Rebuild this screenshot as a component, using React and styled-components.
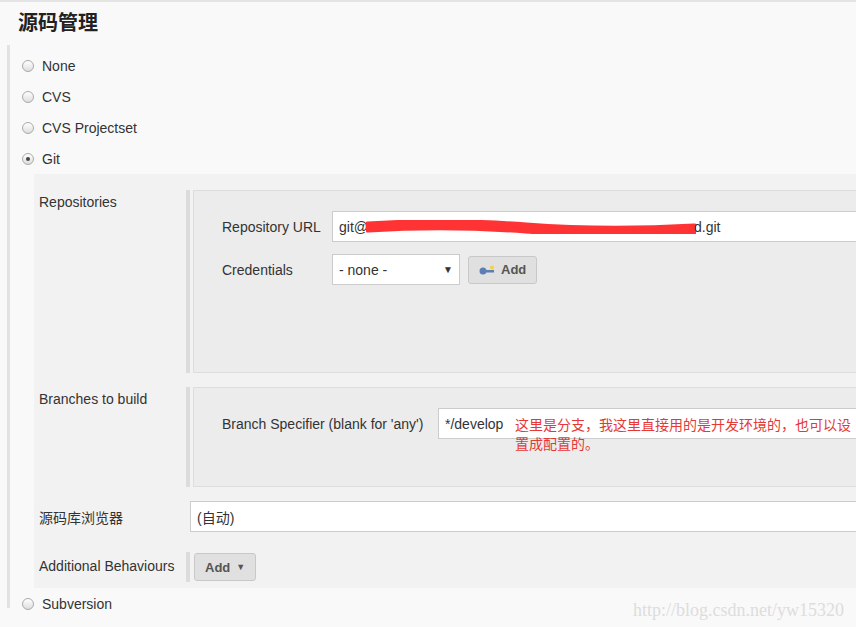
import React from "react";
import styled, { createGlobalStyle } from "styled-components";

const G = createGlobalStyle`
  html,body{margin:0;padding:0;background:#f9f9f9;}
  body{font-family:"Liberation Sans",Arial,"Noto Sans CJK SC",sans-serif;font-size:14px;color:#333;}
`;
const Page = styled.div`width:856px;height:627px;overflow:hidden;border-top:2px solid #e4e4e4;box-sizing:border-box;position:relative;`;
const Title = styled.h1`margin:0;padding:5px 0 0 18px;height:43px;box-sizing:border-box;font-size:20px;font-weight:bold;color:#222;font-family:"Noto Sans CJK SC",sans-serif;`;
const Body = styled.div`margin-left:7px;border-left:3px solid #e2e2e2;padding-top:5px;height:563px;box-sizing:border-box;`;
const Radio = styled.div`display:flex;align-items:center;height:31px;padding-left:12px;gap:8px;`;
const Dot = styled.span`width:10px;height:10px;border-radius:50%;border:1px solid #aaa;background:linear-gradient(#fff,#ddd);display:flex;align-items:center;justify-content:center;
  &::after{content:"";width:4px;height:4px;border-radius:50%;background:${p=>p.on?"#444":"transparent"};}`;
const Section = styled.div`background:#f2f2f2;margin-left:24px;padding:16px 0 6px 0;`;
const Row = styled.div`display:flex;align-items:flex-start;margin-bottom:${p=>p.mb||0}px;`;
const Label = styled.div`width:147px;padding:${p=>p.pt??4}px 0 0 5px;flex:none;`;
const Box = styled.div`flex:1;border-left:4px solid #dcdcdc;padding-left:3px;`;
const Inner = styled.div`background:#ececec;border:1px solid #ddd;border-right:none;height:${p=>p.h}px;padding:20px 0 0 28px;box-sizing:border-box;`;
const Field = styled.div`display:flex;align-items:center;margin-bottom:${p=>p.mb||0}px;`;
const FLabel = styled.div`width:110px;flex:none;`;
const Input = styled.div`height:31px;flex:${p=>p.w?"none":1};width:${p=>p.w?p.w+"px":"auto"};background:#fff;border:1px solid #ccc;border-right:${p=>p.w?"1px solid #ccc":"none"};box-sizing:border-box;display:flex;align-items:center;padding-left:6px;position:relative;`;
const Btn = styled.div`height:28px;padding:0 10px;background:#e0e0e0;border:1px solid #c8c8c8;border-radius:3px;display:flex;align-items:center;gap:6px;font-weight:bold;color:#555;font-size:13px;box-sizing:border-box;`;
const Note = styled.div`position:absolute;left:76px;top:6px;color:#e53935;font-size:14px;line-height:19px;font-family:"Noto Sans CJK SC",sans-serif;width:338px;`;
const Bar = styled.div`border-left:4px solid #dcdcdc;padding:0 0 0 4px;height:30px;display:flex;align-items:center;`;
const Mark = styled.div`position:absolute;right:12px;bottom:6px;font-family:"Liberation Serif",serif;font-size:18px;color:#ddd;`;
const Sub = styled(Radio)`height:32px;`;

export default function App(){
  return <Page><G/>
    <Title>源码管理</Title>
    <Body>
      {["None","CVS","CVS Projectset","Git"].map((t,i)=><Radio key={t}><Dot on={i===3}/>{t}</Radio>)}
      <Section>
        <Row mb={14}>
          <Label>Repositories</Label>
          <Box><Inner h={183}>
            <Field mb={12}><FLabel>Repository URL</FLabel>
              <Input>git@<svg width="330" height="14" style={{margin:"0 -2px"}}><path d="M2 7 Q80 2 160 8 T328 9" stroke="#f33" strokeWidth="11" fill="none" strokeLinecap="round"/></svg>d.git</Input></Field>
            <Field><FLabel>Credentials</FLabel>
              <Input w={128}>- none -<span style={{position:"absolute",right:6,fontSize:10}}>▼</span></Input>
              <div style={{width:8}}/>
              <Btn><svg width="16" height="10"><circle cx="4" cy="6" r="3.5" fill="#5b7fb5"/><rect x="6" y="5" width="9" height="2.5" fill="#5b7fb5"/><circle cx="13" cy="2.5" r="2" fill="#f5d23a"/></svg>Add</Btn>
            </Field>
          </Inner></Box>
        </Row>
        <Row mb={14}>
          <Label>Branches to build</Label>
          <Box><Inner h={100}>
            <Field><div style={{width:216,flex:"none"}}>Branch Specifier (blank for 'any')</div>
              <Input>*/develop<Note>这里是分支，我这里直接用的是开发环境的，也可以设置成配置的。</Note></Input></Field>
          </Inner></Box>
        </Row>
        <Row mb={20}>
          <Label pt={6}>源码库浏览器</Label>
          <Input style={{marginLeft:4}}>(自动)</Input>
        </Row>
        <Row>
          <Label pt={6}>Additional Behaviours</Label>
          <Bar><Btn>Add <span style={{fontSize:9}}>▼</span></Btn></Bar>
        </Row>
      </Section>
      <Sub><Dot/>Subversion</Sub>
    </Body>
    <Mark>http://blog.csdn.net/yw15320</Mark>
  </Page>;
}
